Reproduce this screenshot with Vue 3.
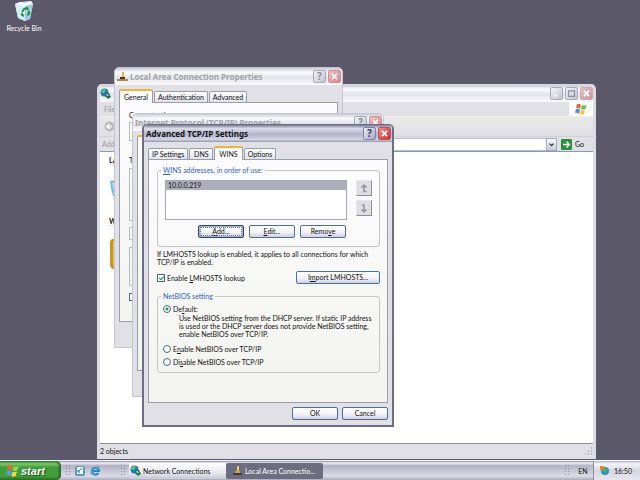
<script setup>
import { ref } from 'vue'

const tab = ref('WINS')
const dialogTabs = ['IP Settings', 'DNS', 'WINS', 'Options']
const connectionTabs = ['General', 'Authentication', 'Advanced']
const addresses = ['10.0.0.219']
const lookup = ref(true)
const netbios = ref('default')
</script>

<template>
  <main class="desktop">
    <a class="shortcut" href="#recycle">
      <svg width="20" height="22" viewBox="0 0 20 22">
        <path d="M1 4 6 2 17 1 19 4 16 19 11 21 4 18Z" fill="#b9d9f0" />
        <path d="M1 4 11 6 11 21 4 18Z" fill="#d8ebf8" />
        <path d="M11 6 19 4 16 19 11 21Z" fill="#a3c8e6" />
        <path d="M1 4 6 2 10 3 17 1 19 4 11 6Z" fill="#f4fafe" />
        <path d="M8 12 10 9 13 8 14 10M15 11 15 14 13 15M10 16 8 15 8 13" fill="none" stroke="#1c9a32" stroke-width="2" />
      </svg>
      <span>Recycle Bin</span>
    </a>

    <section class="window inactive explorer" aria-label="Network Connections">
      <header class="titlebar">
        <svg class="title-icon" width="11" height="11" viewBox="0 0 11 11">
          <circle cx="4.500" cy="4.500" r="4" fill="#2b78b5" />
          <path d="M1 3 4 1 6 2 4 5 2 5Z" fill="#5fc17a" />
          <path d="M5 5H9L11 9 8 11 5 8Z" fill="#2d6b5c" />
          <path d="M6 6H8L9 8H7Z" fill="#7fd0e0" />
        </svg>
        <i class="spacer"></i>
        <button class="cap plain" aria-label="Minimize"><svg viewBox="0 0 13 13"><path d="M4 9H8" stroke="#fff" stroke-width="2" /></svg></button>
        <button class="cap plain" aria-label="Maximize"><svg viewBox="0 0 13 13"><path d="M3 3.500H10V10H3Z" fill="none" stroke="#9090a2" stroke-width="1.500" /></svg></button>
        <button class="cap close" aria-label="Close"><svg viewBox="0 0 13 13"><path d="M3.500 3.500 9.500 9.500M9.500 3.500 3.500 9.500" stroke="#fff" stroke-width="2" /></svg></button>
      </header>
      <nav class="menubar">
        <a href="#file">File</a>
        <span class="flag">
          <svg width="12" height="12" viewBox="0 0 12 12">
            <path d="M2 1Q4 0 6 2L5 6Q3 4 1 5Z" fill="#e66a3c" />
            <path d="M7 2Q9 3 12 2L10 6Q8 7 6 6Z" fill="#71b94d" />
            <path d="M1 6Q3 5 5 7L4 11Q2 9 0 10Z" fill="#4a8fd6" />
            <path d="M6 7Q8 8 10 7L9 11Q7 12 5 11Z" fill="#f2c53a" />
          </svg>
        </span>
      </nav>
      <div class="toolbar">
        <button class="back" aria-label="Back">
          <svg width="11" height="11" viewBox="0 0 11 11"><circle cx="5.500" cy="5.500" r="5" fill="#b9bbbf" /><path d="M8 5.500H3M5.500 3 3 5.500 5.500 8" fill="none" stroke="#fff" stroke-width="1.500" /></svg>
        </button>
      </div>
      <div class="addressbar">
        <label for="address">Address</label>
        <div class="combo">
          <select id="address"><option value="" /></select>
          <svg viewBox="0 0 11 12"><path d="M3 5 5.500 7.500 8 5" fill="none" stroke="#333" stroke-width="1.500" /></svg>
        </div>
        <button class="go">
          <svg width="11" height="11" viewBox="0 0 11 11"><rect width="11" height="11" rx="1" fill="#2c9136" /><path d="M2 5.500H8.500M5.500 2.500 8.500 5.500 5.500 8.500" fill="none" stroke="#fff" stroke-width="1.300" /></svg>
          Go
        </button>
      </div>
      <div class="folder">
        <h3>LAN</h3>
        <svg width="20" height="20" viewBox="0 0 20 20"><path d="M1 3 12 1V13L3 16Z" fill="#79b7e3" /><path d="M3 5 11 3V11L5 13Z" fill="#b8e0f5" /><path d="M4 17H14" stroke="#8897a8" stroke-width="2" /></svg>
        <h3>Wizard</h3>
        <svg width="20" height="30" viewBox="0 0 20 30"><path d="M1 2 3 0H18V27L3 30 1 27Z" fill="#c09a25" /><path d="M4 2H18V25L4 27Z" fill="#edc24c" /></svg>
      </div>
      <footer class="statusbar">
        <span>2 objects</span>
        <svg width="9" height="9" viewBox="0 0 9 9"><path d="M7 1H8M4 4H5M7 4H8M1 7H2M4 7H5M7 7H8" stroke="#b5b5b5" stroke-width="2" /></svg>
      </footer>
    </section>

    <section class="window inactive connection">
      <header class="titlebar">
        <svg class="title-icon" width="11" height="11" viewBox="0 0 11 11"><path d="M5 1H7V6H5Z" fill="#e4b64a" /><path d="M3 6H8V8H3Z" fill="#3a3a3a" /><path d="M0 9H11" stroke="#b1873a" stroke-width="2" /></svg>
        <h2>Local Area Connection Properties</h2>
        <button class="cap" aria-label="Help">?</button>
        <button class="cap close" aria-label="Close"><svg viewBox="0 0 13 13"><path d="M3.500 3.500 9.500 9.500M9.500 3.500 3.500 9.500" stroke="#fff" stroke-width="2" /></svg></button>
      </header>
      <div class="tabs">
        <button v-for="name in connectionTabs" :key="name" class="tab" :class="{ selected: name === 'General' }">{{ name }}</button>
      </div>
      <div class="sheet">
        <p>Connect using:</p>
        <div class="field adapter"></div>
        <p>This</p>
        <div class="field items"></div>
        <div class="field action"></div>
        <div class="field description"></div>
        <input type="checkbox" aria-label="Show icon in notification area when connected">
      </div>
    </section>

    <section class="window inactive protocol">
      <header class="titlebar">
        <h2>Internet Protocol (TCP/IP) Properties</h2>
        <button class="cap" aria-label="Help">?</button>
        <button class="cap close" aria-label="Close"><svg viewBox="0 0 13 13"><path d="M3.500 3.500 9.500 9.500M9.500 3.500 3.500 9.500" stroke="#fff" stroke-width="2" /></svg></button>
      </header>
      <div class="tabs">
        <button class="tab selected" aria-label="General"></button>
      </div>
      <div class="sheet"></div>
    </section>

    <section class="window advanced" role="dialog" aria-labelledby="dialog-title">
      <header class="titlebar">
        <h1 id="dialog-title">Advanced TCP/IP Settings</h1>
        <button class="cap" aria-label="Help">?</button>
        <button class="cap close" aria-label="Close"><svg viewBox="0 0 13 13"><path d="M3.500 3.500 9.500 9.500M9.500 3.500 3.500 9.500" stroke="#fff" stroke-width="2" /></svg></button>
      </header>
      <div class="tabs">
        <button v-for="name in dialogTabs" :key="name" class="tab" :class="{ selected: tab === name }" @click="tab = name">{{ name }}</button>
      </div>
      <div class="sheet">
        <fieldset class="wins">
          <legend><u>W</u>INS addresses, in order of use:</legend>
          <div class="order">
            <ul class="list">
              <li v-for="address in addresses" :key="address">{{ address }}</li>
            </ul>
            <div class="arrows">
              <button aria-label="Move up"><svg viewBox="0 0 14 14"><path d="M7 11V4M4.500 6.500 7 4 9.500 6.500M7 10.500H9.500" /></svg></button>
              <button aria-label="Move down"><svg viewBox="0 0 14 14"><path d="M7 4V11M4.500 8.500 7 11 9.500 8.500M5 4H7.500" /></svg></button>
            </div>
          </div>
          <div class="actions">
            <button class="push focused"><u>A</u>dd...</button>
            <button class="push"><u>E</u>dit...</button>
            <button class="push">Remo<u>v</u>e</button>
          </div>
        </fieldset>
        <p class="note">If LMHOSTS lookup is enabled, it applies to all connections for which TCP/IP is enabled.</p>
        <div class="lookup">
          <label class="option"><input v-model="lookup" type="checkbox"><span>Enable <u>L</u>MHOSTS lookup</span></label>
          <button class="push import">I<u>m</u>port LMHOSTS...</button>
        </div>
        <fieldset class="netbios">
          <legend>NetBIOS setting</legend>
          <label class="option"><input v-model="netbios" type="radio" name="netbios" value="default"><span>De<u>f</u>ault:</span></label>
          <p>Use NetBIOS setting from the DHCP server. If static IP address is used or the DHCP server does not provide NetBIOS setting, enable NetBIOS over TCP/IP.</p>
          <label class="option"><input v-model="netbios" type="radio" name="netbios" value="on"><span>E<u>n</u>able NetBIOS over TCP/IP</span></label>
          <label class="option"><input v-model="netbios" type="radio" name="netbios" value="off"><span>Di<u>s</u>able NetBIOS over TCP/IP</span></label>
        </fieldset>
      </div>
      <footer class="confirm">
        <button class="push">OK</button>
        <button class="push">Cancel</button>
      </footer>
    </section>

    <footer class="taskbar">
      <button class="start">
        <svg width="13" height="13" viewBox="0 0 12 12">
          <path d="M2 1Q4 0 6 2L5 6Q3 4 1 5Z" fill="#ef6a35" />
          <path d="M7 2Q9 3 12 2L10 6Q8 7 6 6Z" fill="#8edb55" />
          <path d="M1 6Q3 5 5 7L4 11Q2 9 0 10Z" fill="#5b9bf0" />
          <path d="M6 7Q8 8 10 7L9 11Q7 12 5 11Z" fill="#fbd44a" />
        </svg>
        <span>start</span>
      </button>
      <i class="grip"></i>
      <div class="quick">
        <a href="#desktop" aria-label="Show desktop"><svg width="10" height="10" viewBox="0 0 10 10"><rect width="10" height="10" rx="2" fill="#5b9cc4" /><rect x="2" y="1" width="6" height="7" fill="#f2f8fc" /><path d="M3 6 7 2M3 4V6H5" stroke="#3776a8" fill="none" /></svg></a>
        <a href="#browser" aria-label="Browser"><svg width="11" height="10" viewBox="0 0 11 10"><path d="M8.500 7A3.500 3.500 0 1 1 9 5H3" fill="none" stroke="#2388c6" stroke-width="2" /><path d="M1 9Q0 7 4 3T10 1" fill="none" stroke="#4aa9dc" /></svg></a>
      </div>
      <i class="grip"></i>
      <button class="task">
        <svg width="11" height="11" viewBox="0 0 11 11">
          <circle cx="4.500" cy="4.500" r="4" fill="#2b78b5" />
          <path d="M1 3 4 1 6 2 4 5 2 5Z" fill="#5fc17a" />
          <path d="M5 5H9L11 9 8 11 5 8Z" fill="#1c7a4c" />
          <path d="M6 6H8L9 8H7Z" fill="#8fe0c0" />
        </svg>
        <span>Network Connections</span>
      </button>
      <button class="task current">
        <svg width="11" height="11" viewBox="0 0 11 11"><path d="M5 1H7V6H5Z" fill="#f0c95a" /><path d="M3 6H8V8H3Z" fill="#c9a23c" /><path d="M1 9H10" stroke="#3d3d46" stroke-width="2" /></svg>
        <span>Local Area Connectio...</span>
      </button>
      <i class="grip push-right"></i>
      <button class="language">EN</button>
      <div class="tray">
        <svg width="11" height="11" viewBox="0 0 11 11"><circle cx="6" cy="6" r="4" fill="#2f8fc0" /><path d="M1 1H5V5H1Z" fill="#d88b32" /><path d="M5 3 8 4 7 8 4 6Z" fill="#55b84a" /></svg>
        <time>16:50</time>
      </div>
    </footer>
  </main>
</template>

<style>
body {
  margin: 0;
  background: #5a5869;
}
</style>

<style scoped>
.desktop {
  position: relative;
  display: flex;
  flex-direction: column;
  min-height: 100vh;
  overflow: hidden;
  background: #5a5869;
  color: #111;
  font: 7px/8px Lato, "DejaVu Sans Condensed", sans-serif;
}
.desktop *,
.desktop *::before {
  box-sizing: border-box;
}
button,
input,
select {
  margin: 0;
  padding: 0;
  font: inherit;
  color: inherit;
}
h1,
h2,
h3,
p,
ul {
  margin: 0;
  padding: 0;
  list-style: none;
}
a {
  color: inherit;
  text-decoration: none;
}
svg {
  flex: none;
}
.shortcut {
  display: flex;
  flex-direction: column;
  align-items: center;
  gap: 2px;
  width: 48px;
  color: #fff;
  white-space: nowrap;
}

/* Windows */
.window {
  position: absolute;
  display: flex;
  flex-direction: column;
  background: #e0e0e6;
  border: 1px solid #6f6c86;
  border-width: 1px 2px 2px;
  border-radius: 5px 5px 0 0;
}
.inactive {
  border-color: #c6c6d2;
  border-width: 1px;
}
.titlebar {
  display: flex;
  align-items: center;
  gap: 2px;
  height: 17px;
  padding: 0 1px 0 2px;
  border-radius: 4px 4px 0 0;
  background: linear-gradient(#77779a, #dcdce8 20%, #b4b5cc 55%, #d4d5e4 85%, #9494ac);
}
.inactive .titlebar {
  background: linear-gradient(#c9cad8, #fbfbfd 25%, #e3e3ec 55%, #fafafc);
}
.titlebar h1,
.titlebar h2,
.spacer {
  flex: 1;
  font: bold 8px/10px "Noto Sans", sans-serif;
  white-space: nowrap;
}
.inactive h2 {
  color: #a2a2a8;
}
.cap {
  width: 13px;
  height: 13px;
  border: 1px solid #8183a4;
  border-radius: 2px;
  background: linear-gradient(135deg, #eef0f8, #a3a6c6);
  color: #363650;
  font: bold 10px/11px "Noto Sans", sans-serif;
  text-align: center;
}
.cap svg {
  display: block;
  width: 11px;
  height: 11px;
}
.cap.close {
  border-color: #bd5156;
  background: linear-gradient(135deg, #ef8f88, #c92d30);
}
.inactive .cap {
  border-color: #a9a9b8;
  background: linear-gradient(135deg, #f4f4f8, #c3c3d0);
  color: #8c8c98;
}
.inactive .cap.close {
  border-color: #cf8f96;
  background: linear-gradient(135deg, #eec0c0, #d98488);
}
.explorer {
  left: 97px;
  top: 84px;
  width: 499px;
  height: 375px;
  border-width: 1px 3px;
  border-color: #dcdce8;
}
.explorer .titlebar {
  padding: 0;
}
.explorer .cap.close {
  border-color: #d5a5ac;
  background: linear-gradient(135deg, #e2c0c4, #cf9598);
}
.menubar {
  display: flex;
  align-items: center;
  height: 15px;
  padding-left: 4px;
  border-bottom: 1px solid #f0f0e4;
  color: #999;
}
.flag {
  display: flex;
  align-items: center;
  justify-content: center;
  width: 24px;
  height: 14px;
  margin-left: auto;
  background: #fff;
}
.toolbar {
  display: flex;
  align-items: center;
  height: 20px;
  padding-left: 4px;
  background: linear-gradient(#e9e9ea, #e0e0e6);
  border-bottom: 1px solid #d0d0d6;
}
.back,
.go {
  display: flex;
  align-items: center;
  gap: 3px;
  border: 0;
  background: none;
}
.addressbar {
  display: flex;
  align-items: center;
  gap: 4px;
  height: 15px;
  padding-left: 2px;
  padding-right: 9px;
  border-bottom: 1px solid #7f9db9;
}
.addressbar label {
  color: #999;
}
.combo {
  position: relative;
  flex: 1;
  display: flex;
}
.combo select {
  width: 100%;
  height: 13px;
  border: 1px solid #b7bccb;
  border-radius: 0;
  background: #fff;
  appearance: none;
}
.combo svg {
  position: absolute;
  right: 0;
  top: 0;
  width: 11px;
  height: 13px;
  border: 1px solid #a5abbd;
  background: linear-gradient(#f6f6fa, #c8cad8);
  pointer-events: none;
}
.folder {
  flex: 1;
  display: flex;
  flex-direction: column;
  align-items: flex-start;
  gap: 13px;
  padding: 4px 9px;
  background: #fff;
}
.folder h3 {
  width: 160px;
  border-bottom: 1px solid #dadae4;
  font-size: 7px;
  line-height: 8px;
}
.folder svg + h3 {
  margin-top: 6px;
}
.statusbar {
  display: flex;
  align-items: center;
  justify-content: space-between;
  height: 15px;
  border-top: 1px solid #8f9094;
}
.connection {
  left: 114px;
  top: 67px;
  width: 229px;
  height: 281px;
  padding-bottom: 25px;
}
.protocol {
  left: 132px;
  top: 113px;
  width: 252px;
  height: 284px;
  padding-bottom: 25px;
}
.advanced {
  left: 142px;
  top: 124px;
  width: 252px;
}

/* Tabs */
.tabs {
  display: flex;
  align-items: flex-end;
  gap: 1px;
  padding: 4px 4px 0;
}
.tab {
  min-width: 24px;
  height: 11px;
  padding: 0 3px;
  border: 1px solid #9a9ca8;
  border-bottom: 0;
  border-radius: 2px 2px 0 0;
  background: linear-gradient(#fff, #e2e2ec);
  white-space: nowrap;
}
.tab.selected {
  position: relative;
  height: 14px;
  margin-bottom: -1px;
  padding: 0 4px;
  border-top: 2px solid #f0b43c;
  background: #fcfcfd;
}
.sheet {
  flex: 1;
  margin: 0 4px;
  border: 1px solid #9c9eaa;
  background: linear-gradient(#fcfcfe, #f3f3ef);
}
.connection .sheet {
  display: flex;
  flex-direction: column;
  align-items: flex-start;
  padding: 8px 9px;
}
.field {
  align-self: stretch;
  border: 1px solid #b9bac4;
}
.adapter {
  height: 19px;
  margin: 3px 0 15px;
}
.items {
  height: 53px;
  margin: 4px 0 6px;
}
.action {
  height: 13px;
}
.description {
  height: 39px;
  margin: 7px 0;
}
.advanced .sheet {
  padding: 6px 7px 29px 8px;
}

/* Dialog contents */
fieldset {
  min-width: 0;
  margin: 0;
  padding: 0 7px;
  border: 1px solid #c4c4c8;
  border-radius: 3px;
}
legend {
  margin: 0;
  padding: 0 2px;
  margin-left: -4px;
  color: #2e5fd0;
}
.order {
  display: flex;
  gap: 9px;
  padding-top: 6px;
}
.list {
  flex: 1;
  height: 40px;
  border: 1px solid #a3a8ba;
  background: #fff;
}
.list li {
  padding-left: 2px;
  line-height: 9px;
  background: #aeaebb;
}
.arrows {
  display: flex;
  flex-direction: column;
  gap: 4px;
}
.arrows button {
  width: 16px;
  height: 16px;
  border: 1px solid #e8e8ec;
  border-right-color: #8f8f98;
  border-bottom-color: #8f8f98;
  background: #dedee2;
}
.arrows svg {
  display: block;
  width: 14px;
  height: 14px;
  fill: none;
  stroke: #92929a;
  stroke-width: 1.5px;
}
.actions {
  display: flex;
  justify-content: flex-end;
  gap: 5px;
  padding: 5px 26px 8px 0;
}
.push {
  width: 46px;
  height: 13px;
  border: 1px solid #4c6f9f;
  border-radius: 2px;
  background: linear-gradient(#fff, #f0f0f6 60%, #cfd0df);
  line-height: 11px;
  text-align: center;
  white-space: nowrap;
}
.push.focused {
  outline: 1px dotted #777;
  outline-offset: -3px;
  border-color: #2c4677;
  box-shadow: inset 0 0 0 1px #9db2dc;
}
.note {
  padding: 3px 0 5px;
}
.lookup {
  display: flex;
  align-items: center;
  justify-content: space-between;
}
.push.import {
  width: 84px;
}
.option {
  display: flex;
  align-items: center;
  gap: 2px;
}
input {
  flex: none;
  width: 8px;
  height: 8px;
  border: 1px solid #456b8c;
  background: #fff;
  appearance: none;
}
input[type="radio"] {
  border-radius: 50%;
}
input[type="radio"]:checked {
  background: radial-gradient(circle, #25a52c 0 1px, #fff 2px);
}
.option input[type="checkbox"]:checked::before {
  content: "";
  display: block;
  width: 3px;
  height: 5px;
  margin-left: 2px;
  border: solid #21a121;
  border-width: 0 1px 1px 0;
  transform: rotate(45deg);
}
.netbios {
  display: flex;
  flex-direction: column;
  gap: 5px;
  margin-top: 8px;
  padding: 5px 5px 6px;
}
.netbios legend {
  margin-left: -2px;
}
.netbios p {
  margin-top: -4px;
  padding: 0 0 2px 16px;
}
.confirm {
  display: flex;
  justify-content: flex-end;
  gap: 4px;
  padding: 4px 4px 5px;
}

/* Taskbar */
.taskbar {
  display: flex;
  align-items: center;
  height: 20px;
  margin-top: auto;
  border-top: 1px solid #f4f4fa;
  background: linear-gradient(#85859b, #f0f0f6 10%, #b3b3c4 25%, #dcdce6 80%, #aaaabc);
}
.start {
  display: flex;
  align-items: center;
  gap: 2px;
  width: 61px;
  height: 19px;
  padding-left: 6px;
  border: 0;
  border-radius: 0 5px 5px 0;
  background: linear-gradient(#2f7d2a, #7cc56c 15%, #3f9c38 35%, #43a03b 80%, #286f25);
  box-shadow: inset -2px 0 2px #2a6b28;
  color: #fff;
  font: italic bold 11px/14px "Liberation Sans", sans-serif;
  text-shadow: 1px 1px 1px #1b4d19;
}
.grip {
  width: 5px;
  height: 13px;
  margin: 0 4px;
  background: radial-gradient(circle, #8c8ca0 0 1px, transparent 1px) 0 0 / 3px 3px;
}
.quick {
  display: flex;
  align-items: center;
  gap: 5px;
  width: 42px;
  padding-left: 1px;
}
.quick a {
  display: flex;
}
.task {
  display: flex;
  align-items: center;
  gap: 2px;
  width: 97px;
  height: 16px;
  padding-left: 1px;
  border: 0;
  border-radius: 2px;
  background: linear-gradient(#fff, #e8e8f0 60%, #c8c8d6);
  white-space: nowrap;
}
.task.current {
  padding-left: 6px;
  background: #6c6d7e;
  color: #fff;
}
.push-right {
  margin-left: auto;
}
.language {
  width: 20px;
  border: 0;
  background: none;
}
.tray {
  display: flex;
  align-items: center;
  gap: 4px;
  height: 19px;
  padding: 0 8px 0 5px;
  border-left: 1px solid #8d8da2;
  background: linear-gradient(#b5b5c6, #f4f4f9 15%, #d7d7e2 50%, #e6e6ee);
}
</style>
